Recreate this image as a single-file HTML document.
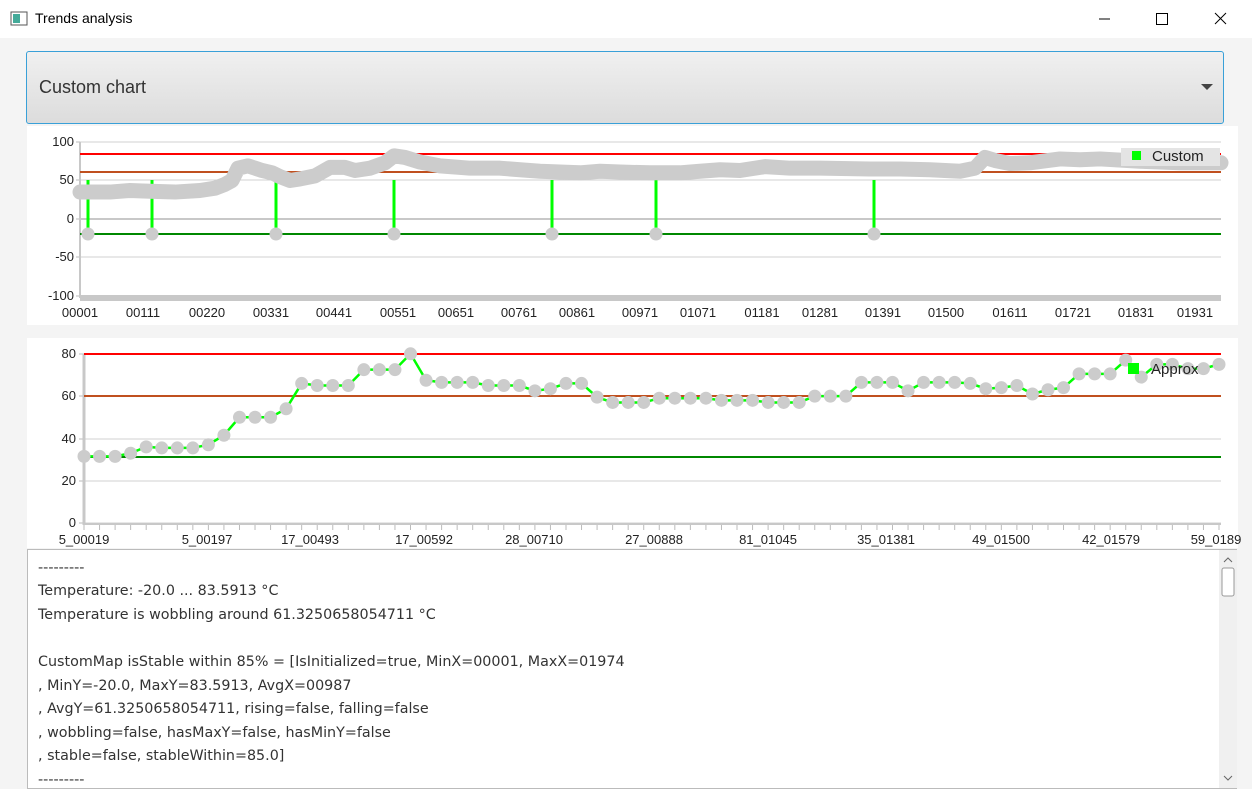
<!DOCTYPE html>
<html><head><meta charset="utf-8"><style>
body{margin:0;width:1252px;height:789px;background:#f4f4f4;font-family:"DejaVu Sans","Liberation Sans",sans-serif;overflow:hidden;position:relative}
.title{position:absolute;left:0;top:0;width:1252px;height:38px;background:#fff;font-size:14px;font-family:"Liberation Sans",sans-serif}
.title span{position:absolute;top:10px}
.combo{position:absolute;left:26px;top:51px;width:1196px;height:71px;border:1.5px solid #39a0d8;border-radius:3px;background:linear-gradient(#f0f0f0,#dcdcdc)}
.combo span{position:absolute;left:12px;top:25px;font-size:18px;color:#333;font-family:"Liberation Sans",sans-serif}
.panel{position:absolute;background:#fff}
.ta{position:absolute;left:27px;top:549px;width:1210px;height:240px;background:#fff;border:1px solid #bbb;box-sizing:border-box}
.ta div{position:absolute;left:10px;font-size:14.3px;color:#333}
svg{position:absolute;left:0;top:0}
#s{font-family:"Liberation Sans",sans-serif}
</style></head><body>
<div class="title">
<svg width="40" height="38"><rect x="11" y="12" width="16" height="13" fill="#fff" stroke="#555"/><rect x="13" y="14" width="7" height="9" fill="#4a9"/></svg>
<span style="left:35px">Trends analysis</span>
<svg width="1252" height="38"><line x1="1099" y1="19" x2="1110" y2="19" stroke="#000"/><rect x="1156.5" y="13.5" width="11" height="11" fill="none" stroke="#000"/><path d="M1215 13L1226 24M1226 13L1215 24" stroke="#000"/></svg>
</div>
<div class="combo"><span>Custom chart</span><svg width="1196" height="71"><path d="M1174 32h12l-6 6z" fill="#444"/></svg></div>
<div class="panel" style="left:27px;top:126px;width:1211px;height:199px"></div>
<div class="panel" style="left:27px;top:338px;width:1211px;height:210px"></div>
<svg id="s" width="1252" height="789" font-size="13" fill="#222"></svg>
<div class="ta">
<div style="top:10px">---------</div>
<div style="top:33px">Temperature: -20.0 ... 83.5913 °C</div>
<div style="top:57px">Temperature is wobbling around 61.3250658054711 °C</div>
<div style="top:104px">CustomMap isStable within 85% = [IsInitialized=true, MinX=00001, MaxX=01974</div>
<div style="top:128px">, MinY=-20.0, MaxY=83.5913, AvgX=00987</div>
<div style="top:151px">, AvgY=61.3250658054711, rising=false, falling=false</div>
<div style="top:175px">, wobbling=false, hasMaxY=false, hasMinY=false</div>
<div style="top:198px">, stable=false, stableWithin=85.0]</div>
<div style="top:222px">---------</div>
<svg width="18" height="238" style="left:1191px;top:0"><rect width="18" height="238" fill="#f0f0f0"/><path d="M5 12l4-4 4 4" stroke="#666" fill="none"/><rect x="3" y="18" width="12" height="28" rx="2" fill="#fff" stroke="#999"/><path d="M5 226l4 4 4-4" stroke="#666" fill="none"/></svg>
</div>
<script>
var s='';
function L(x1,y1,x2,y2,c,w){s+=`<line x1="${x1}" y1="${y1}" x2="${x2}" y2="${y2}" stroke="${c}" stroke-width="${w}"/>`}
function T(x,y,t,a){s+=`<text x="${x}" y="${y}" text-anchor="${a||'middle'}">${t}</text>`}
[[100,142],[50,180],[0,219],[-50,257],[-100,296]].forEach(function(p){L(80,p[1],1221,p[1],p[0]==0?'#c8c8c8':'#d0d0d0',p[0]==0?2:1);T(74,p[1]+4,p[0],'end');L(76,p[1],80,p[1],'#bbb',1)});
L(80,142,80,298,'#c8c8c8',2);
L(80,154,1221,154,'#f00',2);L(80,172,1221,172,'#c0501f',2);L(80,234,1221,234,'#080',2);
[88,152,276,394,552,656,874].forEach(function(x){L(x,234,x,180,'#0f0',3)});
var tv=[[80,35],[110,35],[130,37],[150,36],[175,35],[200,37],[215,40],[225,45],[232,50],[238,66],[248,69],[255,66],[262,63],[272,60],[280,55],[290,50],[300,52],[315,56],[330,67],[345,67],[355,63],[370,66],[385,73],[394,82],[405,80],[420,74],[440,69],[470,66],[500,66],[520,64],[540,62],[560,61],[580,60],[600,62],[620,61],[650,60],[680,60],[700,62],[720,64],[740,63],[765,68],[790,66],[820,66],[870,65],[900,65],[930,64],[960,62],[975,66],[985,80],[995,76],[1010,72],[1030,73],[1060,78],[1080,77],[1100,78],[1140,75],[1180,73],[1221,73]];
s+='<polyline fill="none" stroke="#cccccc" stroke-width="15" stroke-linejoin="round" stroke-linecap="round" points="'+tv.map(function(p){return p[0]+','+(219-p[1]*0.77)}).join(' ')+'"/>';
[88,152,276,394,552,656,874].forEach(function(x){s+=`<circle cx="${x}" cy="234" r="6.5" fill="#ccc"/>`});
L(80,298,1221,298,'#c8c8c8',6);
var xl=['00001','00111','00220','00331','00441','00551','00651','00761','00861','00971','01071','01181','01281','01391','01500','01611','01721','01831','01931'];
var xp=[80,143,207,271,334,398,456,519,577,640,698,762,820,883,946,1010,1073,1136,1195];
xl.forEach(function(t,i){T(xp[i],317,t)});
s+='<rect x="1121" y="148" width="99" height="18" fill="#e4e4e4"/><rect x="1132" y="151" width="9" height="9" fill="#0f0"/>';
s+='<text x="1152" y="161" font-size="15">Custom</text>';
[[80,354],[60,396],[40,439],[20,481],[0,523]].forEach(function(p){L(84,p[1],1221,p[1],'#d0d0d0',1);T(76,p[1]+4,p[0],'end');L(79,p[1],84,p[1],'#bbb',1)});
L(84,354,84,525,'#c8c8c8',3);L(84,524,1221,524,'#c8c8c8',2);
L(84,354,1221,354,'#f00',2);L(84,396,1221,396,'#c0501f',2);L(84,457,1221,457,'#080',2);
var bv=[31.5,31.5,31.5,33,36,35.5,35.5,35.5,37,41.5,50,50,50,54,66,65,65,65,72.5,72.5,72.5,80,67.5,66.5,66.5,66.5,65,65,65,62.5,63.5,66,66,59.5,57,57,57,59,59,59,59,58,58,58,57,57,57,60,60,60,66.5,66.5,66.5,62.5,66.5,66.5,66.5,66,63.5,64,65,61,63,64,70.5,70.5,70.5,77,69,75,75,73,73,75];
var pts=bv.map(function(v,i){return [84+i*(1135/73),523-v*2.115]});
s+='<polyline fill="none" stroke="#0f0" stroke-width="2.5" points="'+pts.map(function(p){return p[0]+','+p[1]}).join(' ')+'"/>';
pts.forEach(function(p){s+=`<circle cx="${p[0]}" cy="${p[1]}" r="6.5" fill="#ccc"/>`;L(p[0],525,p[0],530,'#bbb',1)});
s+='<rect x="1128" y="363" width="11" height="11" fill="#0f0"/><text x="1151" y="374" font-size="15">Approx</text>';
var bl=[['5_00019',84],['5_00197',207],['17_00493',310],['17_00592',424],['28_00710',534],['27_00888',654],['81_01045',768],['35_01381',886],['49_01500',1001],['42_01579',1111],['59_0189',1216]];
bl.forEach(function(b){T(b[1],544,b[0])});
document.getElementById('s').innerHTML=s;
</script>
</body></html>
